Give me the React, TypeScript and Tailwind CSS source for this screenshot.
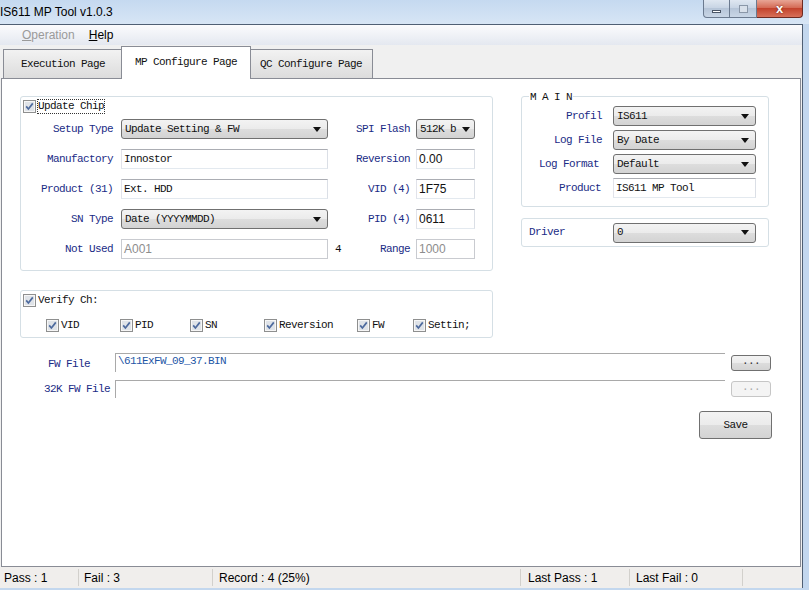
import React from 'react';

const mono = "[font-family:'Liberation_Mono',monospace] text-[11px] tracking-[-0.6px]";
const sans = "[font-family:'Liberation_Sans',Arial,sans-serif]";

function Check({ label, className = '', focus = false }: { label?: string; className?: string; focus?: boolean }) {
  return (
    <div className={`flex items-center h-[15px] ${className}`}>
      <svg width="13" height="13" className="shrink-0">
        <rect x="0.5" y="0.5" width="12" height="12" fill="#f6f6f6" stroke="#8e8f8f" />
        <rect x="2" y="2" width="9" height="9" fill="#dfe3e8" />
        <path d="M3.2 6.4 L5.4 9 L9.8 3.4" stroke="#4d6a9e" strokeWidth="1.7" fill="none" />
      </svg>
      {label && (
        <span className={`${mono} ml-[2px] text-[#111] leading-[13px] ${focus ? 'outline-1 outline-dotted outline-[#333]' : ''}`}>{label}</span>
      )}
    </div>
  );
}

function Combo({ value, className = '' }: { value: string; className?: string }) {
  return (
    <div className={`flex items-center justify-between h-[20px] rounded-[3px] border border-[#707070] bg-[linear-gradient(#f3f3f3,#ebebeb_50%,#dddddd_50%,#d3d3d3)] pl-[3px] pr-[6px] ${className}`}>
      <span className={`${mono} text-[#111]`}>{value}</span>
      <svg width="8" height="5" className="shrink-0">
        <path d="M0 0 H8 L4 5 Z" fill="#111" />
      </svg>
    </div>
  );
}

function TextBox({ value, className = '', sansText = false, disabled = false }: { value: string; className?: string; sansText?: boolean; disabled?: boolean }) {
  return (
    <div className={`flex items-center h-[20px] bg-white border ${disabled ? 'border-[#c9cbd0]' : 'border-[#abadb3] border-l-[#e2e3ea] border-r-[#dbdfe6] border-b-[#e3e9ef]'} pl-[2px] ${className}`}>
      <span className={sansText ? `${sans} text-[12px] ${disabled ? 'text-[#8d8d8d]' : 'text-[#111]'}` : `${mono} text-[#111]`}>{value}</span>
    </div>
  );
}

function Label({ text, className = '' }: { text: string; className?: string }) {
  return <div className={`${mono} text-[#1a2b86] ${className}`}>{text}</div>;
}

export default function App() {
  return (
    <div className="w-[809px] h-[590px] bg-[#c3d7ee] flex flex-col overflow-hidden relative">
      {/* title bar */}
      <div className="h-[24px] flex items-center bg-[linear-gradient(#c5d9f0,#d7e5f5)]">
        <span className={`${sans} text-[12px] text-black`}>IS611 MP Tool v1.0.3</span>
      </div>
      <div className="absolute top-0 right-[6px] flex h-[18px]">
        <div className="w-[27px] h-[18px] rounded-bl-[4px] border border-t-0 border-[#6b7a8f] bg-[linear-gradient(#dfe7f1,#c6d3e3_50%,#b6c5d8_50%,#c9d6e6)] flex items-center justify-center">
          <div className="w-[9px] h-[3px] bg-white border border-[#4a5566] mt-[5px]" />
        </div>
        <div className="w-[27px] h-[18px] border border-t-0 border-l-0 border-[#6b7a8f] bg-[linear-gradient(#dfe7f1,#c6d3e3_50%,#b6c5d8_50%,#c9d6e6)] flex items-center justify-center">
          <div className="w-[9px] h-[8px] border border-[#8a97a8] bg-[#d8e0ea]" />
        </div>
        <div className="w-[46px] h-[18px] rounded-br-[4px] border border-t-0 border-l-0 border-[#6e2a22] bg-[linear-gradient(#e8a595,#d2654f_50%,#c3432d_50%,#d8705a)] flex items-center justify-center">
          <span className={`${sans} text-[13px] font-bold text-white leading-none [text-shadow:0_0_2px_#5a1a10]`}>x</span>
        </div>
      </div>

      {/* client */}
      <div className="flex-1 w-[803px] mb-[2px] border-t border-r border-[#4f5f74] bg-[#f0f0f0] flex flex-col">
        {/* menu */}
        <div className={`h-[20px] flex items-center bg-[linear-gradient(#fbfbfd,#e4e8f0)] ${sans} text-[12px]`}>
          <span className="ml-[22px] text-[#9a9a9a]"><span className="underline">O</span>peration</span>
          <span className="ml-[14px] text-black"><span className="underline">H</span>elp</span>
        </div>

        {/* tabs */}
        <div className="h-[33px] flex items-end pl-[3px]">
          <div className={`w-[119px] h-[29px] border border-b-0 border-[#898c95] bg-[linear-gradient(#f2f2f2,#dcdcdc)] flex items-center pl-[17px] ${mono} text-[#111]`}>
            Execution Page
          </div>
          <div className={`w-[130px] h-[33px] -ml-px -mb-px relative z-10 border border-b-0 border-[#898c95] bg-white flex items-center pl-[13px] pb-[2px] ${mono} text-[#111]`}>
            MP Configure Page
          </div>
          <div className={`w-[123px] h-[29px] -ml-px border border-b-0 border-[#898c95] bg-[linear-gradient(#f2f2f2,#dcdcdc)] flex items-center pl-[9px] ${mono} text-[#111]`}>
            QC Configure Page
          </div>
        </div>

        {/* page */}
        <div className="flex-1 ml-px w-[800px] bg-white border border-[#898c95] pt-[17px] pl-[18px]">
          <div className="flex">
            {/* left column */}
            <div className="w-[473px] flex flex-col">
              <div className="h-[175px] border border-[#d5dfe5] rounded-[3px] pt-[2px] pl-[2px]">
                <Check label="Update Chip" focus />
                <div className="flex flex-col gap-[10px] mt-[5px] -ml-[2px]">
                  <div className="flex items-center h-[20px]">
                    <Label text="Setup Type" className="w-[92px] text-right" />
                    <Combo value="Update Setting & FW" className="ml-[8px] w-[207px]" />
                    <Label text="SPI Flash" className="w-[82px] text-right" />
                    <Combo value="512K b" className="ml-[6px] w-[59px] !pr-[4px]" />
                  </div>
                  <div className="flex items-center h-[20px]">
                    <Label text="Manufactory" className="w-[92px] text-right" />
                    <TextBox value="Innostor" className="ml-[8px] w-[207px]" />
                    <Label text="Reversion" className="w-[82px] text-right" />
                    <TextBox value="0.00" sansText className="ml-[6px] w-[59px]" />
                  </div>
                  <div className="flex items-center h-[20px]">
                    <Label text="Product (31)" className="w-[92px] text-right" />
                    <TextBox value="Ext. HDD" className="ml-[8px] w-[207px]" />
                    <Label text="VID (4)" className="w-[82px] text-right" />
                    <TextBox value="1F75" sansText className="ml-[6px] w-[59px]" />
                  </div>
                  <div className="flex items-center h-[20px]">
                    <Label text="SN Type" className="w-[92px] text-right" />
                    <Combo value="Date (YYYYMMDD)" className="ml-[8px] w-[207px]" />
                    <Label text="PID (4)" className="w-[82px] text-right" />
                    <TextBox value="0611" sansText className="ml-[6px] w-[59px]" />
                  </div>
                  <div className="flex items-center h-[20px]">
                    <Label text="Not Used" className="w-[92px] text-right" />
                    <TextBox value="A001" sansText disabled className="ml-[8px] w-[207px]" />
                    <div className="w-[82px] flex items-center justify-between">
                      <span className={`${mono} text-[#111] ml-[7px]`}>4</span>
                      <Label text="Range" />
                    </div>
                    <TextBox value="1000" sansText disabled className="ml-[6px] w-[59px]" />
                  </div>
                </div>
              </div>

              <div className="h-[48px] mt-[19px] border border-[#d5dfe5] rounded-[3px] pt-[2px] pl-[2px]">
                <Check label="Verify Ch:" />
                <div className="flex mt-[10px] pl-[23px]">
                  <Check label="VID" className="w-[74px]" />
                  <Check label="PID" className="w-[70px]" />
                  <Check label="SN" className="w-[74px]" />
                  <Check label="Reversion" className="w-[93px]" />
                  <Check label="FW" className="w-[56px]" />
                  <Check label="Settin;" />
                </div>
              </div>
            </div>

            {/* right column */}
            <div className="ml-[28px] w-[248px] flex flex-col">
              <div className="relative h-[111px] border border-[#d5dfe5] rounded-[3px] pt-[9px]">
                <span className={`absolute -top-[8px] left-[7px] bg-white px-px ${mono} text-[#111]`}>M A I N</span>
                <div className="flex flex-col gap-[4px]">
                  <div className="flex items-center h-[20px]">
                    <Label text="Profil" className="w-[80px] text-right" />
                    <Combo value="IS611" className="ml-[11px] w-[143px]" />
                  </div>
                  <div className="flex items-center h-[20px]">
                    <Label text="Log File" className="w-[80px] text-right" />
                    <Combo value="By Date" className="ml-[11px] w-[143px]" />
                  </div>
                  <div className="flex items-center h-[20px]">
                    <Label text="Log Format" className="w-[77px] text-right" />
                    <Combo value="Default" className="ml-[14px] w-[143px]" />
                  </div>
                  <div className="flex items-center h-[20px]">
                    <Label text="Product" className="w-[79px] text-right" />
                    <TextBox value="IS611 MP Tool" className="ml-[12px] w-[143px]" />
                  </div>
                </div>
              </div>
              <div className="h-[29px] mt-[11px] border border-[#d5dfe5] rounded-[3px] flex items-center">
                <Label text="Driver" className="w-[91px] pl-[7px]" />
                <Combo value="0" className="w-[143px]" />
              </div>
            </div>
          </div>

          {/* file rows */}
          <div className="w-[752px] flex flex-col mt-[15px]">
            <div className="flex items-center h-[19px]">
              <Label text="FW File" className="w-[95px] pl-[28px] pt-[3px]" />
              <div className="w-[610px] h-[19px] border-t border-l border-[#a9a9a9] pl-[2px] flex items-start">
                <span className={`${mono} text-[#2356a6] leading-[14px]`}>\611ExFW_09_37.BIN</span>
              </div>
              <div className={`ml-[6px] w-[40px] h-[16px] rounded-[3px] border border-[#707070] bg-[linear-gradient(#f3f3f3,#ebebeb_50%,#dddddd_50%,#d3d3d3)] flex items-center justify-center ${mono} text-[#333] leading-none pb-[3px]`}>...</div>
            </div>
            <div className="flex items-center h-[18px] mt-[8px]">
              <Label text="32K FW File" className="w-[95px] pl-[24px]" />
              <div className="w-[610px] h-[18px] border-t border-l border-[#a9a9a9]" />
              <div className={`ml-[6px] w-[40px] h-[16px] rounded-[3px] border border-[#c6c6c6] bg-[#f4f4f4] flex items-center justify-center ${mono} text-[#a8a8a8] leading-none pb-[3px]`}>...</div>
            </div>
            <div className="flex justify-end mt-[13px]">
              <div className={`w-[73px] h-[28px] rounded-[3px] border border-[#707070] bg-[linear-gradient(#f3f3f3,#ebebeb_50%,#dddddd_50%,#d3d3d3)] flex items-center justify-center ${mono} text-[#111]`}>Save</div>
            </div>
          </div>
        </div>

        {/* status bar */}
        <div className={`h-[21px] flex items-center ${sans} text-[12px] text-black bg-[#f0eeec]`}>
          <div className="w-[78px] pl-[4px]">Pass : 1</div>
          <div className="w-[134px] pl-[5px] border-l border-[#d2d0cc] h-[17px] flex items-center">Fail : 3</div>
          <div className="w-[308px] pl-[6px] border-l border-[#d2d0cc] h-[17px] flex items-center">Record : 4 (25%)</div>
          <div className="w-[109px] pl-[7px] border-l border-[#d2d0cc] h-[17px] flex items-center">Last Pass : 1</div>
          <div className="w-[113px] pl-[6px] border-l border-[#d2d0cc] h-[17px] flex items-center">Last Fail : 0</div>
          <div className="flex-1 border-l border-[#d2d0cc] h-[17px]" />
        </div>
      </div>
    </div>
  );
}
